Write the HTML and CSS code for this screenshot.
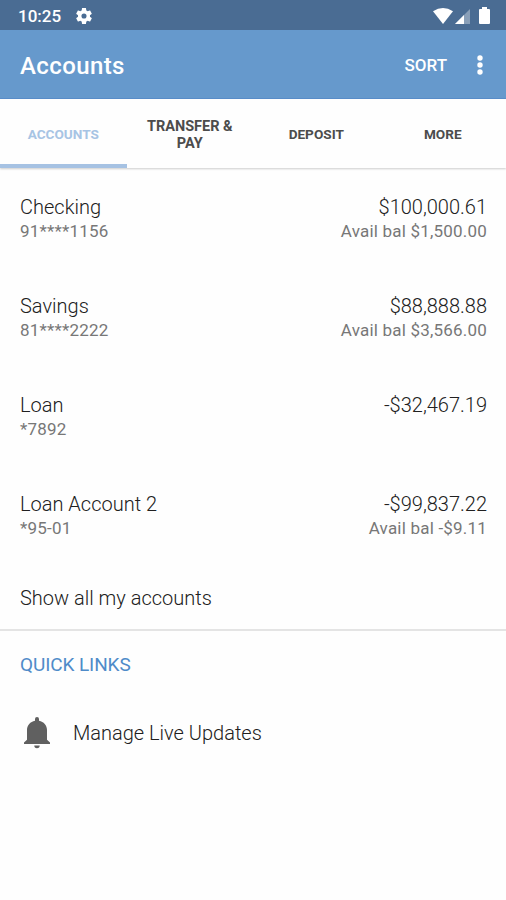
FILE: index.html
```html
<!DOCTYPE html>
<html lang="en">
<head>
  <meta charset="UTF-8" />
  <meta name="viewport" content="width=device-width, initial-scale=1.0"/>
  <title>Accounts</title>
  <link rel="stylesheet" href="styles.css">
</head>

<body>

  <div class="statusbar">
    <span class="time">10:25</span>
    <svg class="gear" viewBox="2 2 20 20"><path d="M19.43 12.98c.04-.32.07-.64.07-.98s-.03-.66-.07-.98l2.11-1.65c.19-.15.24-.42.12-.64l-2-3.46c-.12-.22-.39-.3-.61-.22l-2.49 1c-.52-.4-1.08-.73-1.69-.98l-.38-2.65C14.46 2.18 14.25 2 14 2h-4c-.25 0-.46.18-.49.42l-.38 2.65c-.61.25-1.17.59-1.69.98l-2.49-1c-.23-.09-.49 0-.61.22l-2 3.46c-.13.22-.07.49.12.64l2.11 1.65c-.04.32-.07.65-.07.98s.03.66.07.98l-2.11 1.65c-.19.15-.24.42-.12.64l2 3.46c.12.22.39.3.61.22l2.49-1c.52.4 1.08.73 1.69.98l.38 2.65c.03.24.24.42.49.42h4c.25 0 .46-.18.49-.42l.38-2.65c.61-.25 1.17-.59 1.69-.98l2.49 1c.23.09.49 0 .61-.22l2-3.46c.12-.22.07-.49-.12-.64l-2.11-1.65zM12 15.2a3.2 3.2 0 1 1 0-6.4 3.2 3.2 0 0 1 0 6.4z"/></svg>
    <div class="status-icons">
      <svg class="wifi" viewBox="0 0 20 16"><path d="M0 3.2Q10-3.2 20 3.2L10 16z"/></svg>
      <svg class="signal" viewBox="0 0 15 15"><path opacity=".35" d="M0 15L15 0v15z"/><path d="M0 15L9 6v9z"/></svg>
      <svg class="battery" viewBox="0 0 11 17"><path d="M3 0h5v2h2q1 0 1 1v13q0 1-1 1H1q-1 0-1-1V3q0-1 1-1h2z"/></svg>
    </div>
  </div>

  <header class="appbar">
    <h1>Accounts</h1>
    <button class="sort">SORT</button>
    <button class="overflow" aria-label="More options">
      <svg viewBox="0 0 6 20"><circle cx="3" cy="3" r="2.7"/><circle cx="3" cy="10" r="2.7"/><circle cx="3" cy="17" r="2.7"/></svg>
    </button>
  </header>

  <nav class="tabs">
    <a class="tab active" href="#">ACCOUNTS</a>
    <a class="tab wide" href="#">TRANSFER &amp;<br>PAY</a>
    <a class="tab" href="#">DEPOSIT</a>
    <a class="tab" href="#">MORE</a>
  </nav>

  <main>
    <div class="account">
      <div>
        <p class="name">Checking</p>
        <p class="sub">91****1156</p>
      </div>
      <div class="right">
        <p class="amount">$100,000.61</p>
        <p class="sub">Avail bal $1,500.00</p>
      </div>
    </div>
    <div class="account">
      <div>
        <p class="name">Savings</p>
        <p class="sub">81****2222</p>
      </div>
      <div class="right">
        <p class="amount">$88,888.88</p>
        <p class="sub">Avail bal $3,566.00</p>
      </div>
    </div>
    <div class="account">
      <div>
        <p class="name">Loan</p>
        <p class="sub">*7892</p>
      </div>
      <div class="right">
        <p class="amount">-$32,467.19</p>
      </div>
    </div>
    <div class="account">
      <div>
        <p class="name">Loan Account 2</p>
        <p class="sub">*95-01</p>
      </div>
      <div class="right">
        <p class="amount">-$99,837.22</p>
        <p class="sub">Avail bal -$9.11</p>
      </div>
    </div>
    <a class="show-all" href="#">Show all my accounts</a>

    <section class="quick-links">
      <h2>QUICK LINKS</h2>
      <a class="quick-link" href="#">
        <svg class="bell" viewBox="0 0 26 32"><path d="M11 2a2 2 0 0 1 4 0v1.700c4.700.9 8 4.700 8 9.300v9.800l3 2.700v1.500H0v-1.500l3-2.700V13c0-4.600 3.300-8.400 8-9.300z"/><path d="M10.300 28.500h5.400a2.700 2.700 0 0 1-5.400 0z"/></svg>
        <span>Manage Live Updates</span>
      </a>
    </section>
  </main>

</body>
</html>
```
FILE: styles.css
```css
* {
  box-sizing: border-box;
}
body {
  margin: 0;
  min-height: 100vh;
  background: #fefefe;
  font-family: Roboto, sans-serif;
  color: #202020;
}
h1, h2, p {
  margin: 0;
}
a {
  color: inherit;
  text-decoration: none;
}
button {
  padding: 0;
  border: none;
  background: none;
  color: inherit;
  font-family: inherit;
}
svg {
  display: block;
  fill: currentColor;
}

.statusbar {
  display: flex;
  align-items: center;
  height: 30px;
  padding: 1px 16px 0 18px;
  background: #4a6c93;
  color: #fff;
}
.time {
  font-size: 17px;
  font-weight: 500;
}
.gear {
  width: 16px;
  height: 16px;
  margin-left: 15px;
}
.status-icons {
  display: flex;
  align-items: center;
  margin-left: auto;
}
.wifi {
  width: 20px;
  height: 16px;
}
.signal {
  width: 15px;
  height: 15px;
  margin: 1px 9px 0 2px;
}
.battery {
  width: 11px;
  height: 17px;
}

.appbar {
  display: flex;
  align-items: center;
  height: 69px;
  padding: 2px 23px 0 20px;
  border-bottom: 1px solid #5a8ecb;
  background: #6699cc;
  color: #fff;
}
.appbar h1 {
  padding-top: 2px;
  font-size: 24px;
  font-weight: 500;
  letter-spacing: 0.4px;
}
.sort {
  margin-left: auto;
  font-size: 17px;
  font-weight: 500;
}
.overflow {
  margin-left: 30px;
}
.overflow svg {
  width: 6px;
  height: 20px;
}

.tabs {
  display: grid;
  grid-template-columns: repeat(4, 1fr);
  height: 69px;
  box-shadow: 0 1px 2px rgba(0, 0, 0, 0.2);
}
.tab {
  display: flex;
  align-items: center;
  justify-content: center;
  padding-top: 5px;
  border-bottom: 4px solid transparent;
  font-size: 13.6px;
  font-weight: 700;
  line-height: 17px;
  text-align: center;
  color: #4c4c4c;
}
.tab.wide {
  padding-top: 6px;
  font-size: 14.5px;
}
.tab.active {
  color: #a7c4e4;
  border-bottom-color: #a6c2e3;
}

.account {
  display: flex;
  justify-content: space-between;
  height: 99px;
  padding: 26px 19px 0 20px;
}
.right {
  text-align: right;
}
.name, .amount {
  font-size: 20px;
  font-weight: 300;
  line-height: 26px;
}
.sub {
  font-size: 17px;
  line-height: 23px;
  letter-spacing: 0.2px;
  color: #777;
}
.show-all {
  display: block;
  height: 67px;
  padding: 21px 20px 0;
  border-bottom: 2px solid #e4e4e4;
  font-size: 20px;
  font-weight: 300;
  line-height: 26px;
}

.quick-links h2 {
  padding: 21px 20px 0;
  font-size: 19px;
  font-weight: 400;
  line-height: 26px;
  letter-spacing: -0.1px;
  color: #4f8bc9;
}
.quick-link {
  display: flex;
  align-items: center;
  padding: 39px 24px 0;
  font-size: 20px;
  font-weight: 300;
}
.bell {
  width: 26px;
  height: 32px;
  margin-right: 23px;
  color: #606060;
}
```
